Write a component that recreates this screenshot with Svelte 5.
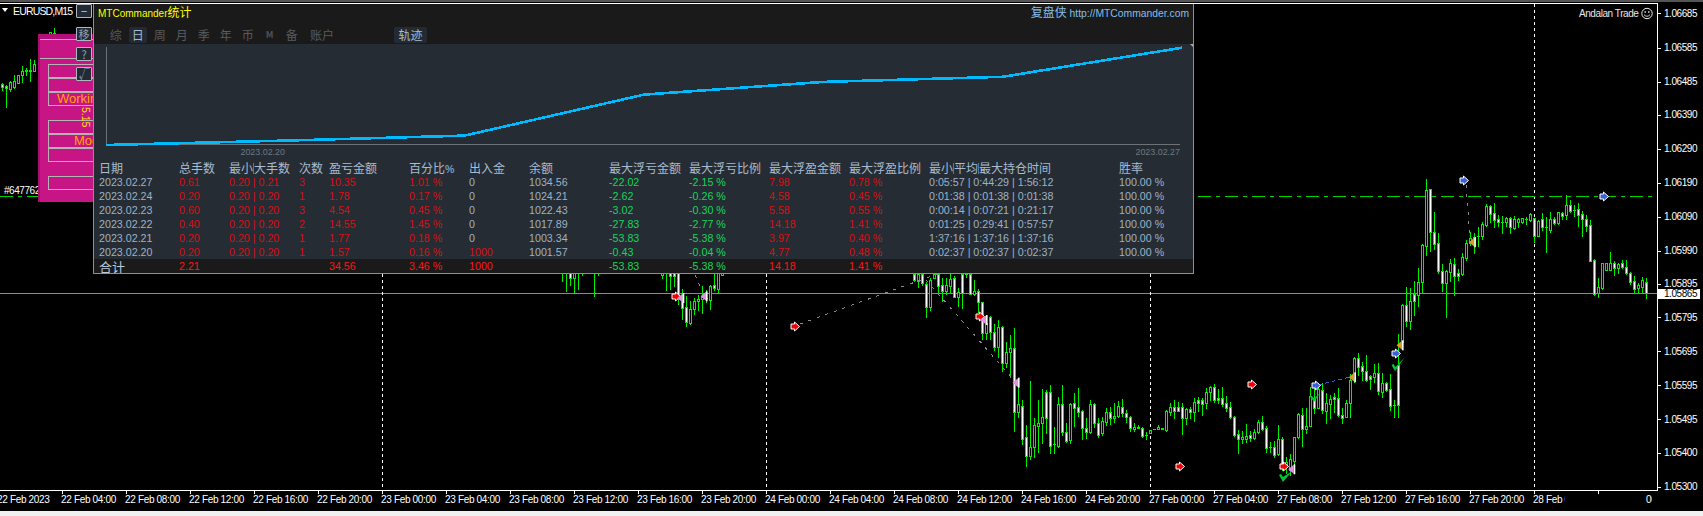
<script>
  const segments = [
    { ox: 0, oy: 0, bars: [[7,250,252,262,270,1],[19,255,258,265,320,1],[31,242,245,268,272,0],[43,225,243,262,265,0],[55,225,225,248,250,0],[67,197,212,226,245,0],[79,205,210,213,225,1],[91,178,210,213,243,1],[103,180,192,212,213,0],[151,97,97,102,102,0],[163,85,100,102,102,0]] },
    { ox: 550, oy: 268, bars: [[37,10,10,10,40,0],[49,10,10,10,70,0],[61,10,10,30,50,1],[73,10,10,30,72,0],[85,10,10,10,62,0],[97,10,10,10,20,0],[133,10,10,10,83,0],[145,10,10,10,20,0],[337,10,15,20,30,0],[349,10,10,10,65,0],[361,10,10,25,62,1],[373,10,10,25,55,1],[385,10,10,90,108,1],[397,63,92,120,152,1],[409,85,118,162,173,1],[421,100,122,165,167,0],[433,90,100,122,137,0],[445,80,92,100,125,0],[457,55,88,92,135,0],[469,65,90,90,103,0],[481,52,55,95,123,0],[493,15,52,60,65,1],[505,10,15,62,75,0],[517,10,15,20,20,0]] },
    { ox: 910, oy: 270, bars: [[13,12,12,30,32,1],[25,12,12,32,52,0],[37,12,12,40,45,1],[49,35,42,110,140,1],[61,25,30,112,120,0],[73,12,12,25,25,0],[85,12,12,48,65,1],[97,25,45,62,92,1],[109,25,45,62,72,0],[121,12,28,47,68,0],[133,18,25,80,80,1],[145,55,65,80,108,0],[157,12,12,70,113,1],[169,12,12,12,20,0],[181,12,12,72,72,1],[193,30,62,72,75,0],[205,57,62,97,125,1],[217,97,97,188,207,1],[229,150,160,188,207,0],[241,138,140,185,208,1],[253,162,185,230,240,1],[265,150,172,230,260,0],[277,168,172,278,302,1],[289,215,245,280,290,0],[301,195,235,245,320,0],[313,175,235,425,483,1],[325,335,403,425,440,0],[337,390,407,507,522,1],[349,465,502,557,587,1],[361,333,532,557,567,0],[373,445,466,530,560,0],[385,390,458,467,545,0],[397,358,440,458,518,0],[409,360,365,443,488,1],[421,345,365,527,548,1],[433,472,523,523,548,0],[445,382,403,527,530,0],[457,345,403,485,495,1],[469,460,485,512,517,1],[481,400,401,510,518,0],[493,370,400,413,467,1],[505,355,412,425,437,1],[517,420,422,475,508,1],[529,443,475,485,505,1],[541,390,403,485,490,0],[553,400,403,458,472,1],[565,443,458,495,502,1],[577,440,452,490,495,0],[589,415,425,455,465,0],[601,412,425,445,462,1],[613,400,437,445,455,0],[625,392,407,437,440,0],[637,388,410,428,437,1],[649,420,428,442,455,1],[661,437,440,475,483,1],[673,460,470,476,482,0],[685,465,470,475,475,0],[697,470,473,497,500,1],[709,485,494,494,507,0]] },
    { ox: 1150, oy: 300, bars: [[1,390,390,400,400,0],[13,388,388,388,388,0],[25,376,382,388,388,0],[37,385,385,388,388,2],[49,330,334,390,393,0],[61,310,322,336,345,0],[73,300,322,332,355,1],[85,305,322,332,333,1],[97,310,322,353,402,1],[109,325,327,353,372,0],[121,322,327,335,355,1],[133,295,307,335,362,0],[145,290,301,308,333,1],[157,295,301,311,345,1],[169,265,277,308,323,0],[181,258,260,277,300,0],[193,252,262,300,307,1],[205,267,295,300,310,1],[217,262,295,312,317,1],[229,288,310,323,333,1],[241,306,322,350,355,1],[253,348,352,405,407,1],[265,390,403,418,458,1],[277,393,412,418,428,0],[289,372,408,416,425,0],[301,392,405,413,423,1],[313,388,397,413,417,0],[325,360,366,397,400,0],[337,348,367,387,390,1],[349,378,385,443,455,1],[361,425,440,440,457,0],[373,422,442,465,470,1],[385,376,418,462,465,0],[397,412,418,495,510,1],[409,472,485,500,520,0],[421,462,478,510,525,0],[433,440,412,482,510,0],[445,340,342,412,415,0],[457,325,344,388,437,1],[469,325,377,388,400,0],[481,260,287,377,377,0],[493,265,295,323,338,1],[505,250,268,325,325,0],[517,250,270,330,338,1],[529,280,310,332,368,0],[541,285,297,312,354,0],[553,280,292,298,335,1],[565,264,295,345,348,1],[577,325,345,353,368,1],[589,300,310,350,350,0],[601,222,240,310,350,0],[613,170,175,240,245,0],[625,160,175,200,225,1],[637,185,198,212,240,1],[649,165,212,240,243,1],[661,225,228,236,267,1],[673,193,220,232,245,0],[685,190,220,272,283,1],[697,220,250,276,290,0],[709,245,250,269,272,1],[721,223,268,317,330,1],[733,300,316,316,350,0],[745,102,195,316,350,1],[757,12,15,125,125,0]] },
    { ox: 1380, oy: 170, bars: [[79,352,405,453,468,1],[91,355,393,453,477,0],[103,332,372,392,435,1],[115,295,337,375,407,0],[127,222,225,337,367,0],[139,27,60,228,255,0],[151,57,57,187,243,1],[163,125,185,222,237,1],[175,190,220,302,308,1],[187,282,302,338,363,1],[199,300,303,340,440,0],[211,268,280,305,332,0],[223,265,283,317,375,1],[235,297,310,317,330,1],[247,250,262,312,315,0],[259,210,220,264,270,0],[271,185,205,220,225,0],[283,190,200,207,248,1],[295,170,197,197,228,0],[307,155,163,197,208,0],[319,102,108,165,168,0],[331,105,108,132,157,1],[343,100,130,150,172,1],[355,135,148,156,168,1],[367,137,155,155,188,0],[379,140,145,155,168,0],[391,140,145,172,190,1],[403,137,148,173,178,0],[415,143,148,155,172,0],[427,143,145,156,160,0],[439,140,146,146,163,0],[451,128,133,150,152,0],[463,145,145,197,215,1],[475,150,153,197,198,0],[487,130,148,172,180,1],[499,140,172,172,245,0],[511,125,148,179,185,0],[523,140,148,160,163,1],[535,125,127,160,162,0],[547,125,128,137,147,1],[559,75,105,135,147,0],[571,90,105,122,125,1],[583,105,120,120,137,0],[595,100,118,135,168,1],[607,122,132,147,197,1],[619,135,147,167,182,1],[631,150,165,272,273,1],[643,267,270,372,375,1],[655,325,352,370,380,0],[667,278,280,355,357,0],[679,278,280,300,300,0],[691,247,280,300,300,0],[703,272,280,293,315,1],[715,280,282,294,310,0],[727,270,280,290,295,1],[739,270,290,310,312,1],[751,305,310,336,342,1],[763,318,332,357,365,1],[775,340,345,353,367,0],[787,322,331,352,365,0],[799,325,335,370,383,1]] }
  ];

  const candles = segments.flatMap((s) =>
    s.bars.map(([zx, hi, top, bot, lo, kind]) => {
      const y = (v) => Math.round(s.oy + v / 3);
      const t = y(top);
      return { x: Math.floor(s.ox + zx / 3), hi: y(hi), lo: y(lo), t, h: Math.max(1, y(bot) - t + 1), kind };
    })
  );

  const prices = [["1.06685",13],["1.06585",47.6],["1.06485",81.6],["1.06390",114.6],["1.06290",148.6],["1.06190",182.6],["1.06090",216.6],["1.05990",250.6],["1.05895",283.6],["1.05795",317.3],["1.05695",351.3],["1.05595",385.3],["1.05495",419.3],["1.05400",452.6],["1.05300",486.6]];

  const stamps = ["22 Feb 04:00","22 Feb 08:00","22 Feb 12:00","22 Feb 16:00","22 Feb 20:00","23 Feb 00:00","23 Feb 04:00","23 Feb 08:00","23 Feb 12:00","23 Feb 16:00","23 Feb 20:00","24 Feb 00:00","24 Feb 04:00","24 Feb 08:00","24 Feb 12:00","24 Feb 16:00","24 Feb 20:00","27 Feb 00:00","27 Feb 04:00","27 Feb 08:00","27 Feb 12:00","27 Feb 16:00","27 Feb 20:00"];
  const days = [382, 766, 1150, 1534];

  const RIGHT = "M-4 -2.5H-0.5V-4.5L4.5 0L-0.5 4.5V2.5H-4Z";
  const arrows = [
    [1180,466.5,"#f00000"],[1252,384.5,"#f00000"],[1284,466.5,"#f00000"],[980,316.5,"#f00000"],[676,296.5,"#f00000"],[795,326.5,"#f00000"],
    [1316,385.5,"#3d62d8"],[1396,353.5,"#3d62d8"],[1464,180.5,"#3d62d8"],[1604,196.5,"#3d62d8"]
  ];
  const flags = [
    [984,320,"#e48fe0"],[1016,382.7,"#e48fe0"],[1291.7,469.3,"#e48fe0"],[680.7,298,"#e48fe0"],[704,296.3,"#e48fe0"],
    [1352.3,377.3,"#dc9a28"],[1400,345.3,"#dc9a28"],[1472.3,242.3,"#dc9a28"]
  ];
  const checks = [
    "M1279 475L1281 474L1283 477L1292 471.3L1283 482Z",
    "M1391.5 365L1393.5 364L1395.5 367L1405 357L1395 371Z",
    "M1310 396.5L1312 396L1314 398.5L1320 393L1314 402Z"
  ];

  const tabs = ["综","日","周","月","季","年","币","M","备"];

  const balance = [[106,145],[285.3,140.6],[464.6,135.6],[644,94.6],[823.3,81.9],[1002.6,76.8],[1182,47.7]];
  const curve = balance.map((p) => p.join(",")).join(" ");

  const rows = [
    ["2023.02.27","0.61","0.20 | 0.21","3","10.35","1.01 %","0","1034.56","-22.02","-2.15 %","7.98","0.78 %","0:05:57 | 0:44:29 | 1:56:12"],
    ["2023.02.24","0.20","0.20 | 0.20","1","1.78","0.17 %","0","1024.21","-2.62","-0.26 %","4.58","0.45 %","0:01:38 | 0:01:38 | 0:01:38"],
    ["2023.02.23","0.60","0.20 | 0.20","3","4.54","0.45 %","0","1022.43","-3.02","-0.30 %","5.58","0.55 %","0:00:14 | 0:07:21 | 0:21:17"],
    ["2023.02.22","0.40","0.20 | 0.20","2","14.55","1.45 %","0","1017.89","-27.83","-2.77 %","14.18","1.41 %","0:01:25 | 0:29:41 | 0:57:57"],
    ["2023.02.21","0.20","0.20 | 0.20","1","1.77","0.18 %","0","1003.34","-53.83","-5.38 %","3.97","0.40 %","1:37:16 | 1:37:16 | 1:37:16"],
    ["2023.02.20","0.20","0.20 | 0.20","1","1.57","0.16 %","1000","1001.57","-0.43","-0.04 %","4.77","0.48 %","0:02:37 | 0:02:37 | 0:02:37"]
  ];
  const tint = ["", "r", "r", "r", "r", "r", "", "", "g", "g", "r", "r", ""];
  const cellClass = (r, i) => (i === 6 && r[6] !== "0" ? "r" : tint[i]);
  const panelRows = [
    { cls: "wide", text: "" }, { cls: "p64", text: "" }, { cls: "", text: "" }, { cls: "work", text: "Working" },
    { cls: "p120", text: "" }, { cls: "mo", text: "Mode" }, { cls: "", text: "" }, { cls: "p176", text: "" }
  ];
  const buttons = [["−","b1"],["移","b2"],["?","b3"],["√","b4"]];
</script>

<div class="screen">
  <div class="strip"></div>
  <svg class="chart" viewBox="0 2 1703 509" width="1703" height="509">
    <rect x="0" y="3" width="1658" height="1" fill="#fff" class="crisp" />
    <rect x="0" y="293" width="1658" height="1" fill="#8a8a8a" class="crisp" />
    {#each days as d}
      <line x1={d + 0.5} y1="4" x2={d + 0.5} y2="490" class="grid" />
    {/each}
    <line x1="0" y1="196.5" x2="38" y2="196.5" class="target" />
    <line x1="1198" y1="196.5" x2="1657" y2="196.5" class="target" />

    <g class="crisp">
      {#each candles as c}
        <rect x={c.x} y={c.hi} width="1" height={c.lo - c.hi + 1} fill="#00f000" />
        <rect x={c.x - 1} y={c.t} width="3" height={c.h} fill="#00f000" />
        {#if c.h > 2 && c.kind !== 2}
          <rect x={c.x} y={c.t + 1} width="1" height={c.h - 2} fill={c.kind === 1 ? "#fff" : "#000"} />
        {/if}
      {/each}
    </g>

    <line x1="800" y1="324" x2="940" y2="273" class="dots" />
    <line x1="920" y1="273" x2="1012" y2="378" class="dots" />
    <line x1="695" y1="275" x2="702" y2="291" class="dots" />
    <line x1="1466" y1="185" x2="1470" y2="237" class="dots" />
    <line x1="1318" y1="385" x2="1350" y2="377" class="dots blue" />

    {#each checks as d}
      <path {d} class="check" />
    {/each}
    {#each arrows as [x, y, fill]}
      <path d={RIGHT} transform="translate({x} {y})" {fill} class="marker" />
    {/each}
    {#each flags as [x, y, fill]}
      <g transform="translate({x} {y})">
        <path d="M2 -4.5L-3.5 0L2 4.5Z" {fill} />
        <rect x="2" y="-5" width="1.6" height="10" fill="#fff" />
      </g>
    {/each}

    <path d="M2 8H8L5 12Z" fill="#fff" />
    <text x="13" y="15" class="sym">EURUSD,M15</text>
    <text x="4" y="194" class="axis">#64776240</text>
    <text x="1579" y="16.5" class="brand">Andalan Trade</text>
    <g transform="translate(1647 13.5)" class="smile">
      <circle r="5.2" />
      <path d="M-3 1.2Q0 4.4 3 1.2" />
      <circle cx="-1.8" cy="-1.5" r="0.5" />
      <circle cx="1.8" cy="-1.5" r="0.5" />
    </g>

    <rect x="1657" y="3" width="1" height="488" fill="#fff" class="crisp" />
    <rect x="0" y="490" width="1658" height="1" fill="#fff" class="crisp" />
    {#each prices as [label, y]}
      <rect x="1658" y={Math.round(y)} width="3" height="1" fill="#fff" class="crisp" />
      <text x="1664" y={y + 3.5} class="axis">{label}</text>
    {/each}
    <rect x="1658" y="289" width="42" height="10" fill="#fff" class="crisp" />
    <text x="1664" y="297" class="axis dark">1.05865</text>

    {#each stamps as s, i}
      <rect x={62 + i * 64} y="491" width="1" height="3" fill="#fff" class="crisp" />
      <text x={61 + i * 64} y="503" class="axis time">{s}</text>
    {/each}
    <text x="-3" y="503" class="axis time">22 Feb 2023</text>
    <rect x="1534" y="491" width="1" height="3" fill="#fff" class="crisp" />
    <rect x="1598" y="491" width="1" height="3" fill="#fff" class="crisp" />
    <clipPath id="lastClip"><rect x="1533" y="490" width="32" height="20" /></clipPath>
    <clipPath id="endClip"><rect x="1646" y="490" width="6" height="20" /></clipPath>
    <text x="1533" y="503" class="axis time" clip-path="url(#lastClip)">28 Feb 00:00</text>
    <text x="1646" y="503" class="axis time" clip-path="url(#endClip)">00:00</text>
  </svg>
  <div class="foot"></div>

  <div class="panel">
    {#each panelRows as row}
      <div class="prow {row.cls}">{row.text}</div>
    {/each}
    <span class="ver">5.15</span>
  </div>

  {#each buttons as [label, cls]}
    <div class="btn {cls}">{label}</div>
  {/each}

  <section class="win">
    <header class="top">
      <div class="title">MTCommander<span class="cjk">统计</span></div>
      <div class="site"><span class="cjk">复盘侠</span> http://MTCommander.com</div>
    </header>
    <nav class="tabs">
      {#each tabs as t}
        <span class="tab" class:on={t === "日"} class:m={t === "M"}>{t}</span>
      {/each}
      <span class="tab acct">账户</span>
      <span class="tab track">轨迹</span>
    </nav>
    <svg class="graph" viewBox="94 44 1099 117" width="1099" height="117">
      <path d="M106.5 47V144.5H1180" class="frame" />
      <polyline points={curve} class="curve" />
      <path d="M1190 44L1193 41V47Z" fill="#aaa" />
      <text x="240.5" y="155" class="gdate">2023.02.20</text>
      <text x="1135.5" y="155" class="gdate">2023.02.27</text>
    </svg>
    <div class="tbl">
      <div class="row head">
        <span>日期</span><span>总手数</span><span>最小<i class="sep"></i>大手数</span><span>次数</span><span>盈亏金额</span><span>百分比<b>%</b></span><span>出入金</span><span>余额</span><span>最大浮亏金额</span><span>最大浮亏比例</span><span>最大浮盈金额</span><span>最大浮盈比例</span><span>最小<i class="sep"></i>平均<i class="sep"></i>最大持仓时间</span><span>胜率</span>
      </div>
      {#each rows as r}
        <div class="row">
          {#each r as v, i}
            <span class={cellClass(r, i)}>{v}</span>
          {/each}
          <span>100.00 %</span>
        </div>
      {/each}
      <div class="row sum">
        <span class="sumlabel">合计</span><span class="hot">2.21</span><span></span><span></span><span class="hot">34.56</span><span class="hot">3.46 %</span><span class="hot">1000</span><span></span><span class="g">-53.83</span><span class="g">-5.38 %</span><span class="hot">14.18</span><span class="hot">1.41 %</span><span></span><span></span>
      </div>
    </div>
  </section>
</div>

<style>
  :global(body) { margin: 0; background: #000; }
  .screen {
    position: relative;
    width: 1703px;
    height: 516px;
    overflow: hidden;
    background: #000;
    display: flex;
    flex-direction: column;
    font-family: "Liberation Sans", Arial, sans-serif;
  }
  .strip { height: 2px; background: #555; flex: none; }
  .chart { display: block; flex: none; }
  .foot { flex: 1; background: #f0f0f0; }
  .crisp { shape-rendering: crispEdges; }
  .grid { stroke: #fff; stroke-dasharray: 3 3; shape-rendering: crispEdges; }
  .target { stroke: #00d400; stroke-dasharray: 13 5 4 5; shape-rendering: crispEdges; }
  .dots { stroke: #8a8a8a; stroke-dasharray: 3 6; stroke-width: 1; shape-rendering: crispEdges; }
  .dots.blue { stroke: #3d62d8; stroke-dasharray: 4 3; }
  .check { fill: #00c832; }
  .marker { stroke: #fff; stroke-width: 1; }
  .axis { fill: #fff; font: 10px "Liberation Sans", sans-serif; letter-spacing: -0.45px; }
  .axis.dark { fill: #000; }
  .axis.time { letter-spacing: -0.33px; }
  .sym { fill: #fff; font: 10.5px "Liberation Sans", sans-serif; letter-spacing: -0.83px; }
  .brand { fill: #e8e8e8; font: 10px "Liberation Sans", sans-serif; letter-spacing: -0.43px; }
  .smile circle { fill: none; stroke: #e8e8e8; stroke-width: 1; }
  .smile path { fill: none; stroke: #e8e8e8; stroke-width: 0.9; }

  .panel {
    position: absolute;
    left: 38px;
    top: 34px;
    width: 56px;
    height: 168px;
    box-sizing: border-box;
    background: #c71585;
    border-left: 2px solid #a81070;
    border-top: 5px solid #b21078;
    display: flex;
    flex-direction: column;
    overflow: hidden;
  }
  .prow {
    flex: none;
    box-sizing: border-box;
    height: 14px;
    margin-left: 8px;
    width: 80px;
    border: 1px solid #b4b4b4;
    color: #ffa500;
    font-size: 13px;
    line-height: 12px;
    white-space: nowrap;
    overflow: hidden;
  }
  .prow.wide { margin-left: -1px; height: 20px; width: 90px; margin-bottom: 5px; }
  .prow.work { padding-left: 8px; }
  .prow.p120 { margin-top: 14px; }
  .prow.mo { padding-left: 25px; }
  .prow.p176 { margin-top: 14px; }
  .ver {
    position: absolute;
    left: 41px;
    top: 68px;
    writing-mode: vertical-rl;
    color: #ffe600;
    font-size: 10.5px;
    line-height: 10px;
  }
  .btn {
    position: absolute;
    left: 76px;
    box-sizing: border-box;
    width: 16px;
    height: 14px;
    background: #222b35;
    border: 1px solid #aeb6bf;
    border-radius: 1px;
    color: #93a3b5;
    font: 11px/12px "Noto Sans CJK SC", "Liberation Sans", sans-serif;
    text-align: center;
  }
  .b1 { top: 4px; color: #cfd6dd; }
  .b2 { top: 27px; }
  .b3 { top: 47px; }
  .b4 { top: 67px; }

  .win {
    position: absolute;
    left: 93px;
    top: 4px;
    width: 1101px;
    height: 270px;
    box-sizing: border-box;
    border: 1px solid #8291a3;
    border-top: 0;
    background: #252c34;
    overflow: hidden;
  }
  .top {
    height: 18px;
    background: #1a1a1a;
    display: flex;
    justify-content: space-between;
    align-items: center;
    padding: 0 4px;
    font-size: 10px;
  }
  .cjk { font-family: "Noto Sans CJK SC", sans-serif; font-size: 12px; }
  .title { color: #ffff00; line-height: 18px; }
  .site { color: #84bfeb; font-size: 10.33px; line-height: 18px; }
  .tabs {
    height: 22px;
    box-sizing: border-box;
    background: #1a1a1a;
    padding: 5px 0 1px 10.7px;
    display: flex;
    font: 12px/16px "Noto Sans CJK SC", sans-serif;
  }
  .tab { width: 18px; margin: 0 2px; text-align: center; color: #575b60; border-radius: 2px; }
  .tab.on { background: #232a33; color: #a9bccf; }
  .tab.m { font-weight: 700; font-size: 9px; color: #4d5359; }
  .tab.acct { width: 34.6px; }
  .tab.track { width: 33px; margin-left: 52.7px; background: #232a33; color: #a9bccf; }
  .graph { display: block; }
  .frame { fill: none; stroke: #6c7278; stroke-width: 1; shape-rendering: crispEdges; }
  .curve { fill: none; stroke: #00baff; stroke-width: 2.6; shape-rendering: crispEdges; }
  .gdate { fill: #6e7985; font: 8.9px "Liberation Sans", sans-serif; }

  .tbl { display: flex; flex-direction: column; }
  .row {
    display: grid;
    grid-template-columns: 80px 50px 70px 30px 80px 60px 60px 80px 80px 80px 80px 80px 190px 1fr;
    height: 14px;
    padding-left: 5px;
    font-size: 10.7px;
    line-height: 14px;
    color: #9fb2c6;
    white-space: nowrap;
  }
  .head { color: #a9bccf; font: 12px/14px "Noto Sans CJK SC", sans-serif; }
  .head b { color: #6f9cd0; font: 700 10.7px "Liberation Sans", sans-serif; }
  .sep { display: inline-block; width: 1px; height: 11px; background: #4b78ad; vertical-align: -1px; }
  .r { color: #d81012; }
  .g { color: #14d65a; }
  .hot { color: #ff1414; }
  .sum { background: #1a1a1a; }
  .sumlabel { color: #b9cadb; font: 13px/16px "Noto Sans CJK SC", sans-serif; }
</style>
